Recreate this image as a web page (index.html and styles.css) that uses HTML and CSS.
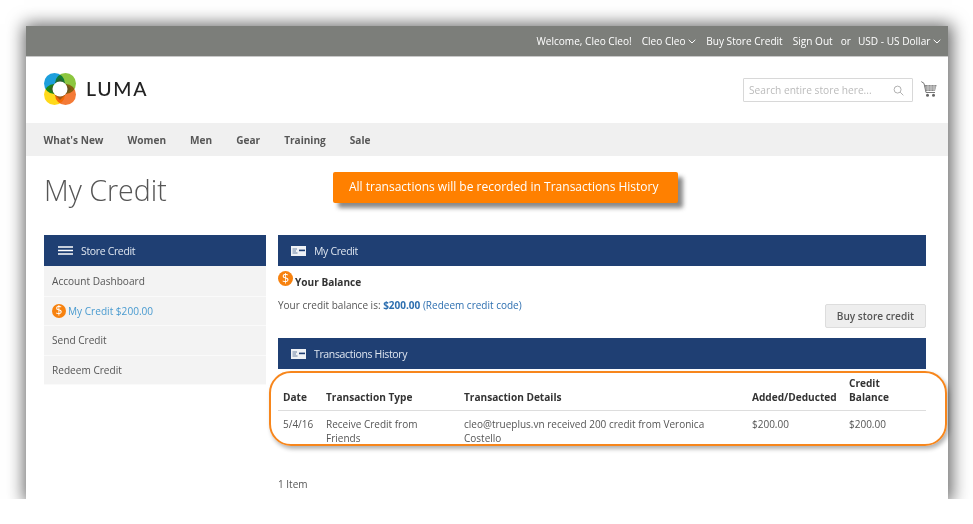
FILE: index.html
```html
<!DOCTYPE html>
<html>
<head>
<title>My Credit</title>
<meta name="viewport" content="width=device-width, initial-scale=1.0">
<link rel="stylesheet" href="styles.css">
</head>
<body>

<div class="shot">

<div class="topbar">
  <span>Welcome, Cleo Cleo!</span>
  <span>Cleo Cleo <svg class="chev" viewBox="0 0 8 5"><path d="M.7.8 4 4 7.3.8"/></svg></span>
  <span>Buy Store Credit</span>
  <span>Sign Out</span>
  <span class="or">or</span>
  <span>USD - US Dollar <svg class="chev" viewBox="0 0 8 5"><path d="M.7.8 4 4 7.3.8"/></svg></span>
</div>

<header class="head">
  <div class="logo">
    <svg class="logo-mark" viewBox="0 0 32 32">
      <circle cx="10.5" cy="10.5" r="10.5" fill="#1d9fdc"/>
      <circle cx="21.5" cy="10.5" r="10.5" fill="#8cc63f" style="mix-blend-mode:multiply"/>
      <circle cx="10.5" cy="21.5" r="10.5" fill="#ffd91a" style="mix-blend-mode:multiply"/>
      <circle cx="21.5" cy="21.5" r="10.5" fill="#f47a36" style="mix-blend-mode:multiply"/>
      <path d="M16 5 27 16 16 27 5 16Z" fill="#4a4a2a" opacity=".5"/>
      <circle cx="16" cy="16" r="7.5" fill="#fff"/>
    </svg>
    <span class="logo-text">LUMA</span>
  </div>
  <div class="head-right">
    <div class="search">
      <span>Search entire store here...</span>
      <svg class="search-ico" viewBox="0 0 12 12"><circle cx="5" cy="5" r="3.8"/><path d="M7.8 7.8 11.3 11.3"/></svg>
    </div>
    <svg class="cart" viewBox="0 0 16 16">
      <path class="cart-line" d="M.3.6 3 2.4 5 11.5H14"/>
      <path class="cart-fill" d="M3.6 4H15.6L14 10H5Z"/>
      <path class="cart-grid" d="M4.5 6H15M5 8H14.5M7 4V10M10 4V10M13 4V10"/>
      <circle class="cart-wheel" cx="6.5" cy="14.2" r="1.5"/>
      <circle class="cart-wheel" cx="12.5" cy="14.2" r="1.5"/>
    </svg>
  </div>
</header>

<nav class="nav">
  <a>What's New</a>
  <a>Women</a>
  <a>Men</a>
  <a>Gear</a>
  <a>Training</a>
  <a>Sale</a>
</nav>

<h1 class="title">My Credit</h1>

<div class="callout">All transactions will be recorded in Transactions History</div>

<div class="columns">
  <aside class="side">
    <div class="bar bar-side">
      <svg class="burger" viewBox="0 0 15 9"><path d="M0 1H15M0 4.5H15M0 8H15"/></svg>
      Store Credit
    </div>
    <ul class="side-list">
      <li>Account Dashboard</li>
      <li class="current"><span class="coin">$</span>My Credit $200.00</li>
      <li>Send Credit</li>
      <li>Redeem Credit</li>
    </ul>
  </aside>

  <main class="content">
    <div class="bar">
      <svg class="card" viewBox="0 0 15 10"><rect width="15" height="10" fill="#eef1f5"/><path d="M1.5 3H6M1.5 5H5M1.5 7H6.5" stroke="#6d83a3" fill="none"/><rect x="8" y="3.6" width="6" height="1.6" fill="#1f3f73"/></svg>
      My Credit
    </div>
    <div class="balance-title"><span class="coin coin-big">$</span><b>Your Balance</b></div>
    <div class="balance-row">
      <p class="balance-text">Your credit balance is: <b>$200.00</b> <a>(Redeem credit code)</a></p>
      <button class="buy">Buy store credit</button>
    </div>
    <div class="bar">
      <svg class="card" viewBox="0 0 15 10"><rect width="15" height="10" fill="#eef1f5"/><path d="M1.5 3H6M1.5 5H5M1.5 7H6.5" stroke="#6d83a3" fill="none"/><rect x="8" y="3.6" width="6" height="1.6" fill="#1f3f73"/></svg>
      Transactions History
    </div>
    <table class="trans">
      <tr>
        <th class="c1">Date</th>
        <th class="c2">Transaction Type</th>
        <th class="c3">Transaction Details</th>
        <th class="c4">Added/Deducted</th>
        <th class="c5">Credit Balance</th>
      </tr>
      <tr>
        <td>5/4/16</td>
        <td>Receive Credit from Friends</td>
        <td>cleo@trueplus.vn received 200 credit from Veronica Costello</td>
        <td>$200.00</td>
        <td>$200.00</td>
      </tr>
    </table>
    <p class="count">1 Item</p>
  </main>
</div>

<div class="oval"></div>

</div>

</body>
</html>
```

FILE: styles.css
```css
body {
   background: #fff;
   color: #555;
   font-family: 'Open Sans', sans-serif;
   font-size: 10px;
   margin: 0;
   overflow: hidden;}

p {
   margin: 0;}

.shot {
   background: #fff;
   box-shadow: 1px 1px 16px 3px rgba(0,0,0,.6);
   box-sizing: border-box;
   height: 473px;
   margin: 26px 0 0 26px;
   position: relative;
   width: 922px;}

.topbar {
   align-items: center;
   background: #7c7e7a;
   border-bottom: 1px solid #c9c9c9;
   box-sizing: border-box;
   color: #fff;
   display: flex;
   font-size: 10.1px;
   gap: 10px;
   height: 31px;
   justify-content: flex-end;
   padding: 0 7px 1px 0;}

.or {
   margin: 0 -3px 0 -2px;}

.chev {
   fill: none;
   height: 5px;
   stroke: #fff;
   stroke-width: 1;
   vertical-align: 1px;
   width: 8px;}

.head {
   align-items: center;
   box-sizing: border-box;
   display: flex;
   height: 66px;
   justify-content: space-between;
   padding: 0 11px 3px 18px;}

.logo {
   align-items: center;
   display: flex;
   gap: 10px;}

.logo-mark {
   height: 32px;
   width: 32px;}

.logo-text {
   color: #222;
   font-family: 'Lato', sans-serif;
   font-size: 19.5px;
   font-weight: 500;
   letter-spacing: 1.7px;}

.head-right {
   align-items: center;
   display: flex;
   gap: 8px;}

.search {
   align-items: center;
   border: 1px solid #d8d8d8;
   border-radius: 1px;
   box-sizing: border-box;
   color: #bbb;
   display: flex;
   font-size: 10.2px;
   height: 24px;
   justify-content: space-between;
   margin-top: 3px;
   padding: 0 8px 0 5px;
   width: 170px;}

.search-ico {
   fill: none;
   height: 11px;
   stroke: #aaa;
   stroke-width: 1;
   width: 11px;}

.cart {
   height: 16px;
   width: 16px;}

.cart-line {
   fill: none;
   stroke: #777;
   stroke-width: 1;}

.cart-fill {
   fill: #8c8c8c;}

.cart-grid {
   fill: none;
   stroke: #ddd;
   stroke-width: .7;}

.cart-wheel {
   fill: #666;}

.nav {
   align-items: center;
   background: #f0f0f0;
   box-sizing: border-box;
   color: #575757;
   display: flex;
   font-size: 10.1px;
   font-weight: 700;
   gap: 24px;
   height: 33px;
   padding: 0 0 0 17.5px;}

.title {
   color: #555;
   font-size: 28.6px;
   font-weight: 300;
   line-height: 40px;
   margin: 14px 0 25px 18px;}

.callout {
   background: #ff8000;
   border-radius: 2px;
   box-shadow: 5px 5px 4px rgba(60,60,60,.6);
   box-sizing: border-box;
   color: #fff;
   font-size: 12px;
   height: 31px;
   left: 307px;
   line-height: 29px;
   padding-left: 16px;
   position: absolute;
   top: 146px;
   width: 345px;}

.columns {
   display: flex;
   gap: 12px;
   padding: 0 22px 0 18px;}

.side {
   flex: 0 0 222px;}

.bar {
   align-items: center;
   background: #1f3f73;
   box-sizing: border-box;
   color: #dfe6f0;
   display: flex;
   font-size: 10.5px;
   gap: 8px;
   height: 31px;
   letter-spacing: -.35px;
   padding-left: 13px;}

.bar-side {
   padding-left: 14px;}

.burger {
   fill: none;
   height: 9px;
   stroke: #fff;
   stroke-width: 1.5;
   width: 15px;}

.card {
   height: 10px;
   width: 15px;}

.side-list {
   background: #f3f3f3;
   font-size: 10.1px;
   list-style: none;
   margin: 0;
   padding: 1px 0 0;}

.side-list li {
   align-items: center;
   border-bottom: 1px solid #fafafa;
   box-sizing: border-box;
   display: flex;
   height: 29.6px;
   padding-left: 8px;}

.current {
   color: #4a9bd0;}

.coin {
   background: #f7820f;
   border-radius: 50%;
   color: #fff;
   display: inline-block;
   flex: none;
   font-size: 12px;
   height: 14px;
   line-height: 14px;
   margin-right: 2px;
   text-align: center;
   width: 14px;}

.coin-big {
   font-size: 12.5px;
   height: 15px;
   line-height: 15px;
   position: relative;
   top: -3px;
   width: 15px;}

.content {
   flex: 1;
   min-width: 0;}

.balance-title {
   color: #333;
   font-size: 10.1px;
   height: 24px;
   padding-top: 8px;}

.balance-text b {
   color: #2d6fb0;}

.balance-text a {
   color: #2d6fb0;}

.balance-row {
   align-items: flex-start;
   display: flex;
   height: 40px;
   justify-content: space-between;}

.buy {
   background: #eee;
   border: 1px solid #ddd;
   border-radius: 2px;
   color: #555;
   font-family: inherit;
   font-size: 10.1px;
   font-weight: 600;
   height: 24px;
   margin-top: 6px;
   padding: 0 11px;}

.trans {
   border-collapse: collapse;
   margin-top: 7px;
   table-layout: fixed;
   width: 648px;}

.trans th {
   border-bottom: 1px solid #ddd;
   color: #333;
   font-size: 10.1px;
   font-weight: 700;
   line-height: 14px;
   padding: 0 5px 6px;
   text-align: left;
   vertical-align: bottom;}

.trans td {
   line-height: 14px;
   padding: 6px 5px 0;
   vertical-align: top;}

.c1 { width: 33px; }
.c2 { width: 128px; }
.c3 { width: 278px; }
.c4 { width: 87px; }

.count {
   margin-top: 32px;}

.oval {
   border: 2px solid #f7861c;
   border-radius: 22px;
   box-shadow: 2px 3px 4px rgba(0,0,0,.3);
   box-sizing: border-box;
   height: 75px;
   left: 243px;
   position: absolute;
   top: 345px;
   width: 678px;}
```
